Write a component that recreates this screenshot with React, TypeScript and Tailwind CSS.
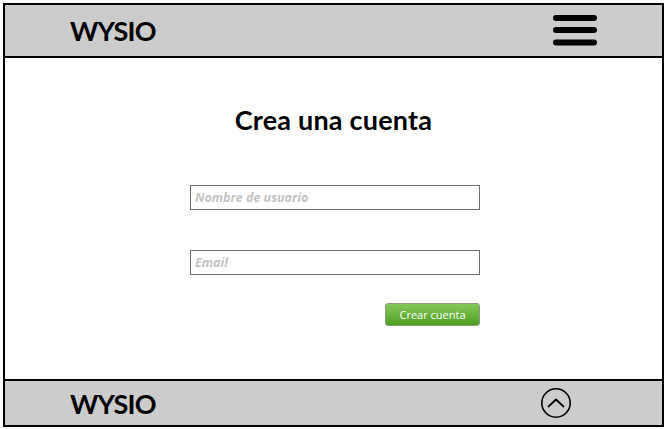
import * as React from "react";

function Hamburger() {
  return (
    <svg width="46" height="34" viewBox="0 0 46 34" className="block">
      <line x1="4" y1="4" x2="42" y2="4" stroke="#000" strokeWidth="6" strokeLinecap="round" />
      <line x1="4" y1="16" x2="42" y2="16" stroke="#000" strokeWidth="6" strokeLinecap="round" />
      <line x1="4" y1="28.5" x2="42" y2="28.5" stroke="#000" strokeWidth="6" strokeLinecap="round" />
    </svg>
  );
}

function UpCircle() {
  return (
    <svg width="32" height="32" viewBox="0 0 32 32" className="block">
      <circle cx="16" cy="16" r="14.2" fill="none" stroke="#000" strokeWidth="1.6" />
      <path d="M8.5 19.5 L16 12.5 L23.5 19.5" fill="none" stroke="#000" strokeWidth="1.8" strokeLinecap="round" strokeLinejoin="round" />
    </svg>
  );
}

export default function App() {
  return (
    <div className="w-[668px] h-[429px] bg-white pt-[3px] pl-[3px]" style={{ fontFamily: "Lato, 'DejaVu Sans', sans-serif" }}>
      <div className="w-[661px] h-[424px] border-2 border-black flex flex-col">
        {/* header */}
        <div className="h-[53px] shrink-0 bg-[#cccccc] border-b-2 border-black flex items-center justify-between pl-[65px] pr-[64px]">
          <span className="text-[27px] font-bold text-black leading-none tracking-[-0.8px]">WYSIO</span>
          <Hamburger />
        </div>

        {/* main */}
        <div className="flex-1 flex flex-col items-center pt-[48px]">
          <h1 className="text-[27px] font-bold text-black leading-none tracking-[0.2px]">Crea una cuenta</h1>
          <div className="w-[290px] ml-[3px] mt-[52px] flex flex-col">
            <input
              className="h-[25px] border border-[#6e6e6e] px-[4px] text-[12.5px] italic font-bold outline-none placeholder:text-[#c3c3c3]"
              style={{ fontFamily: "'Open Sans', sans-serif" }}
              placeholder="Nombre de usuario"
            />
            <input
              className="h-[25px] mt-[40px] border border-[#6e6e6e] px-[4px] text-[12.5px] italic font-bold outline-none placeholder:text-[#c3c3c3]"
              style={{ fontFamily: "'Open Sans', sans-serif" }}
              placeholder="Email"
            />
            <div className="flex justify-end mt-[28px]">
              <button
                className="w-[95px] h-[23px] rounded-[3px] border border-[#8a9a80] bg-gradient-to-b from-[#86c85a] to-[#4e9f20] text-white text-[11px] leading-none"
                style={{ fontFamily: "'Open Sans', sans-serif" }}
              >
                Crear cuenta
              </button>
            </div>
          </div>
        </div>

        {/* footer */}
        <div className="h-[46px] shrink-0 bg-[#cccccc] border-t-2 border-black flex items-center justify-between pl-[65px] pr-[90px]">
          <span className="text-[27px] font-bold text-black leading-none tracking-[-0.8px]">WYSIO</span>
          <UpCircle />
        </div>
      </div>
    </div>
  );
}
